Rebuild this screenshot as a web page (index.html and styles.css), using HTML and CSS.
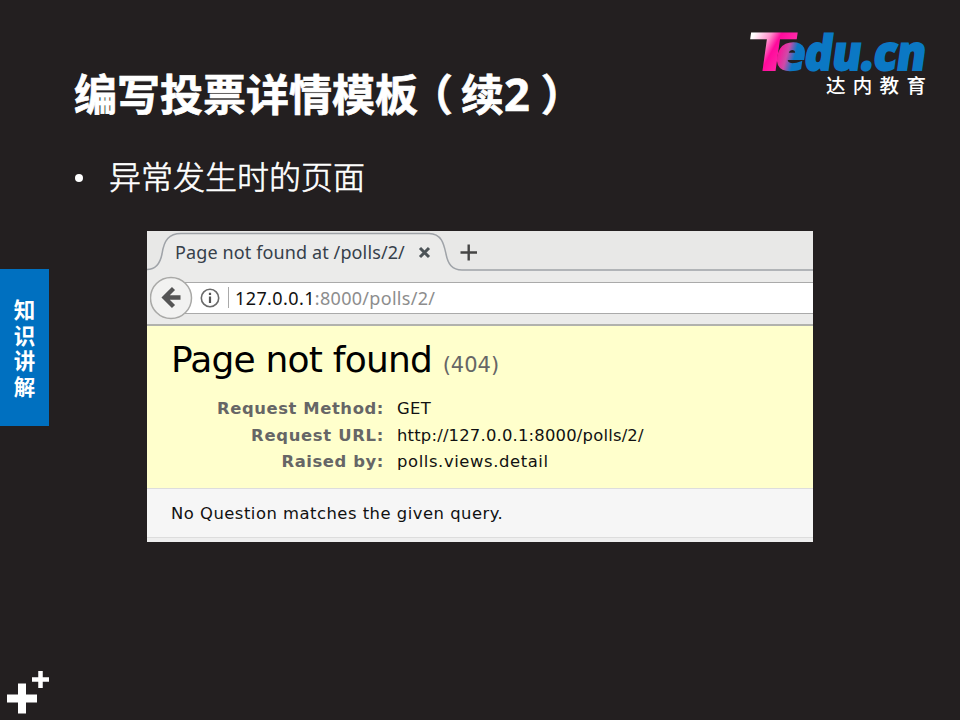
FILE: index.html
```html
<!DOCTYPE html>
<html lang="zh-CN">
<head>
<meta charset="utf-8">
<title>编写投票详情模板（续2）</title>
<link rel="stylesheet" href="styles.css">
</head>
<body>
<div class="slide">
  <aside class="rail">
    <div class="section-tab"><span>知</span><span>识</span><span>讲</span><span>解</span></div>
    <svg class="crosses" width="49" height="52" viewBox="0 0 49 52">
      <path d="M7 30.500H37M22 15.500V45.500" class="cross-big"/>
      <path d="M32 11.500H49M40.500 3V20" class="cross-small"/>
    </svg>
  </aside>
  <main class="content">
    <header class="slide-head">
      <h1 class="title">编写投票详情模板<span class="paren-open">（</span>续<span class="num">2</span><span class="paren-close">）</span></h1>
      <svg class="logo" width="190" height="80" viewBox="0 0 190 80">
        <defs>
          <linearGradient id="tee" x1="0" y1="0" x2="1" y2="0.6">
            <stop offset="0.2" stop-color="#ffffff"/>
            <stop offset="0.45" stop-color="#ff8fcb"/>
            <stop offset="0.6" stop-color="#ff0a9c"/>
            <stop offset="1" stop-color="#ff3cae"/>
          </linearGradient>
          <linearGradient id="ee" x1="0" y1="0.5" x2="1" y2="0.8">
            <stop offset="0.1" stop-color="#f51b9b"/>
            <stop offset="0.35" stop-color="#d04aa8"/>
            <stop offset="0.6" stop-color="#0b78c4"/>
          </linearGradient>
        </defs>
        <text class="logo-text logo-tee" transform="translate(4 50.500) skewX(-8)" font-size="54" textLength="50" lengthAdjust="spacingAndGlyphs" fill="url(#tee)">T</text>
        <text class="logo-text" transform="translate(34 49.500) skewX(-8)" font-size="48" textLength="30" lengthAdjust="spacingAndGlyphs" fill="url(#ee)" stroke="url(#ee)" stroke-width="1.500">e</text>
        <text class="logo-text" transform="translate(63 49.500) skewX(-8)" font-size="48" textLength="121" lengthAdjust="spacingAndGlyphs" fill="#0b78c4" stroke="#0b78c4" stroke-width="2">du.cn</text>
        <text class="logo-sub" x="86" y="73" font-size="19.500" letter-spacing="7.300">达内教育</text>
      </svg>
    </header>
    <ul class="points"><li>异常发生时的页面</li></ul>
    <section class="browser">
      <div class="tabs">
        <svg class="tab-shape" width="666" height="40" viewBox="0 0 666 40">
          <path d="M0 38.500C9 38.500 13 33 15 23C17 9 22 2.500 34 2.500H282C295 2.500 297 14 299 23C301 33 305 39 315 39H666V40H0Z" fill="#ebebea"/>
          <path d="M0 38.500C9 38.500 13 33 15 23C17 9 22 2.500 34 2.500H282C295 2.500 297 14 299 23C301 33 305 39 315 39H666" fill="none" stroke="#9fa3a8" stroke-width="1.500"/>
          <path d="M273 17L282 26M282 17L273 26" stroke="#4c5357" stroke-width="3"/>
          <path d="M313.500 21.500H330M321.700 13.500V29.500" stroke="#454545" stroke-width="2.400"/>
        </svg>
        <span class="tab-title">Page not found at /polls/2/</span>
      </div>
      <div class="toolbar">
        <svg class="back" width="43" height="44" viewBox="0 0 43 44">
          <circle cx="21" cy="22" r="20.500" fill="#f2f2f1" stroke="#a9a9a7" stroke-width="1.500"/>
          <path d="M30.500 21.500H15M23.500 12.500L14.500 21.500L23.500 30.500" fill="none" stroke="#555" stroke-width="4.300"/>
        </svg>
        <div class="address">
          <svg class="info" width="20" height="20" viewBox="0 0 20 20">
            <circle cx="10" cy="10" r="8.700" fill="none" stroke="#6a6a6a" stroke-width="1.600"/>
            <path d="M10 8.500V15M10 4.800V7" stroke="#555" stroke-width="2.200"/>
          </svg>
          <i class="divider"></i>
          <span class="url"><b>127.0.0.1</b>:8000/polls/2/</span>
        </div>
      </div>
      <div class="summary">
        <h2>Page not found <small>(404)</small></h2>
        <dl class="meta">
          <dt class="m1">Request Method:</dt><dd class="v1">GET</dd>
          <dt class="m2">Request URL:</dt><dd class="v2">http://127.0.0.1:8000/polls/2/</dd>
          <dt class="m3">Raised by:</dt><dd class="v3">polls.views.detail</dd>
        </dl>
      </div>
      <p class="info-line">No Question matches the given query.</p>
      <div class="page-end"></div>
    </section>
  </main>
</div>
</body>
</html>
```
FILE: styles.css
```css
* { box-sizing: border-box; }
body { margin: 0; background: #231f20; }
.slide {
  display: grid;
  grid-template-columns: 49px 1fr;
  width: 960px;
  height: 720px;
  overflow: hidden;
  background: #231f20;
  color: #fff;
  font-family: "Noto Sans", "Noto Sans CJK SC", sans-serif;
}
.rail {
  display: flex;
  flex-direction: column;
  justify-content: space-between;
  padding-top: 269px;
}
.section-tab {
  display: flex;
  flex-direction: column;
  align-items: center;
  height: 157px;
  padding-top: 27px;
  background: #0070c0;
  font: bold 21.5px/25.5px "Noto Sans CJK SC", sans-serif;
}
.crosses { display: block; fill: none; stroke: #fff; }
.cross-big { stroke-width: 8; }
.cross-small { stroke-width: 4.5; }
.content { display: flex; flex-direction: column; min-width: 0; }
.slide-head {
  display: flex;
  justify-content: space-between;
  height: 149px;
  padding: 20px 30px 0 25px;
}
.title {
  width: 500px;
  margin: 40px 0 0;
  font: bold 43px/64px "Noto Sans CJK SC", sans-serif;
  -webkit-text-stroke: 0.7px #fff;
  white-space: nowrap;
}
.num { font-size: 45px; font-family: "Open Sans", sans-serif; line-height: 1; }
.paren-open { margin: 0 8px 0 -8px; }
.paren-close { margin-left: 11px; }
.logo { display: block; flex: none; overflow: visible; }
.logo-text { font-family: "Open Sans", sans-serif; font-weight: 800; }
.logo-tee { font-weight: 700; }
.logo-sub { font-family: "Noto Sans CJK SC", sans-serif; font-weight: 500; fill: #fff; }
.points {
  margin: 0;
  padding: 0 0 0 26px;
  height: 82px;
  list-style: none;
  font: 300 32px/56px "Noto Sans CJK SC", sans-serif;
  -webkit-text-stroke: 0.6px #fff;
}
.points li { display: flex; align-items: center; gap: 26px; height: 52px; }
.points li::before { content: ""; width: 8px; height: 8px; margin-top: 5px; border-radius: 50%; background: #fff; }
.browser {
  width: 666px;
  height: 311px;
  margin-left: 98px;
  background: #ebebea;
  color: #000;
  font-family: "DejaVu Sans", sans-serif;
  overflow: hidden;
}
.tabs { display: grid; height: 40px; background: #e8e8e7; }
.tabs > * { grid-area: 1 / 1; }
.tab-title {
  padding-left: 28px;
  font: 18px/43px "Noto Sans", sans-serif;
  letter-spacing: 0.12px;
  color: #36404a;
  white-space: nowrap;
}
.toolbar {
  display: flex;
  align-items: center;
  height: 55px;
  padding-left: 3px;
  border-bottom: 2px solid #b1b2ad;
}
.back { flex: none; z-index: 1; }
.address {
  display: flex;
  align-items: center;
  flex: 1;
  height: 32px;
  margin-left: -8px;
  padding-left: 15px;
  background: #fff;
  border-top: 1.5px solid #aaa;
  border-bottom: 1.5px solid #aaa;
}
.divider { width: 1px; height: 21px; margin: 0 6px 0 8px; background: #aaa; }
.url { font: 18px/28px "Noto Sans", sans-serif; letter-spacing: 0.3px; color: #8d8d8d; }
.url b { font-weight: 400; letter-spacing: 0.4px; color: #111; }
.summary { height: 162px; padding: 9px 24px 0; background: #ffffcc; }
.summary h2 {
  margin: 0;
  font-size: 36px;
  line-height: 50px;
  font-weight: 400;
  letter-spacing: -0.8px;
  white-space: nowrap;
}
.summary small { font-size: 21px; letter-spacing: 0; color: #666; }
.meta {
  display: grid;
  grid-template-columns: 213px 1fr;
  grid-auto-rows: 26.7px;
  column-gap: 13px;
  margin: 6px 0 0;
  font-size: 16.4px;
  line-height: 26.7px;
  color: #111;
}
.meta dt { font-weight: 700; color: #666; text-align: right; }
.meta dd { margin: 0; }
.m1 { letter-spacing: 0.6px; }
.m2 { letter-spacing: 0.7px; }
.m3 { letter-spacing: 0.6px; }
.v1 { letter-spacing: 0.3px; }
.v2 { letter-spacing: 0.2px; }
.v3 { letter-spacing: 0.6px; }
.info-line {
  height: 50px;
  margin: 0;
  padding-left: 24px;
  background: #f6f6f6;
  border-top: 1px solid #ddd;
  border-bottom: 1px solid #ddd;
  font-size: 16.4px;
  line-height: 50px;
  letter-spacing: 0.5px;
  color: #111;
}
.page-end { height: 4px; background: #eee; }
```
